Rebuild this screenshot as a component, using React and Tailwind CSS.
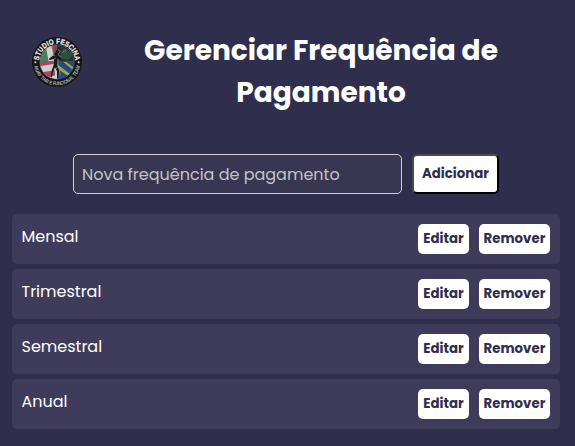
const frequencies = ['Mensal', 'Trimestral', 'Semestral', 'Anual'];

function Logo() {
  return (
    <svg viewBox="0 0 50 50" className="size-[52px] shrink-0" role="img" aria-label="Studio Fescina">
      <defs>
        <path id="top-arc" d="M7.6 25a17.4 17.4 0 0 1 34.8 0" />
        <path id="bottom-arc" d="M2.6 25a22.4 22.4 0 0 0 44.8 0" />
        <clipPath id="disc"><circle cx="25" cy="25" r="16.5" /></clipPath>
      </defs>
      <circle cx="25" cy="25" r="24.6" fill="#161619" stroke="#45434d" strokeWidth=".5" />
      <g clipPath="url(#disc)">
        <path d="M8 8h17v17H8z" fill="#8b918d" />
        <path d="M8 8h8l5 16H8z" fill="#4d7c65" />
        <path d="M14 8h5l4 17h-6z" fill="#d3d1cc" />
        <path d="M20 8h6v16h-3z" fill="#8a4247" />
        <path d="M25 8h17v17H25z" fill="#26362f" />
        <path d="M31 12l10 5-5 6-9-2z" fill="#304c3d" />
        <path d="M8 25h17v18H8z" fill="#cfccd6" />
        <path d="M8 24h14v3L8 29zM9 35l14-2v5l-12 3z" fill="#a5485a" />
        <path d="M25 24h17v18H25z" fill="#244a80" />
        <path d="M25 27l17 13v3L25 31zM34 25l8 6v3l-11-9z" fill="#a5a444" />
      </g>
      <circle cx="25" cy="25" r="16.5" fill="none" stroke="#77777c" strokeWidth=".4" />
      <path d="M25 13l3 2-1 3 3 3-2 2-3-1v5l2 6-1 8-1-1v-6l-2-4-2 5-1 5-1-1 1-6 2-6v-5l-4 1-1-1 5-4z" fill="#17191d" />
      <path d="M26 13l2 2-2 3 4 3m-6 0l-4 3m6-2v7l-3 4m4-3l1 8M19 18l4 1m7-3l4-3" fill="none" stroke="#aaa9a2" strokeWidth=".6" />
      <g fontFamily="'Liberation Sans', sans-serif" fontWeight="700">
        <text fontSize="7.2" fill="#f0efef" stroke="#f0efef" strokeWidth=".2">
          <textPath href="#top-arc" startOffset="1.5" textLength="51.5" lengthAdjust="spacingAndGlyphs">STUDIO FESCINA</textPath>
        </text>
        <text fontSize="5.2" fill="#b4b3b6">
          <textPath href="#bottom-arc" startOffset="4.5" textLength="61.5" lengthAdjust="spacingAndGlyphs">MUAY THAI E FUNCIONAL TEAM</textPath>
        </text>
      </g>
      <circle cx="4.2" cy="25.2" r="1" fill="#d9d8da" />
      <circle cx="45.8" cy="25.2" r="1" fill="#d9d8da" />
    </svg>
  );
}

function RowButton({ className, children }) {
  return (
    <button className={`h-[30px] rounded-[5px] bg-white text-[13.33px] font-bold leading-[30px] whitespace-nowrap text-[#302e4d] ${className}`}>
      {children}
    </button>
  );
}

export default function App() {
  return (
    <main className="h-screen overflow-hidden bg-[#302e4d] pl-3 pr-[15px] font-['Poppins','Inter',sans-serif] text-white">
      <header className="flex h-[154px] items-start pl-[19px] pt-[30px]">
        <div className="mt-[6px]"><Logo /></div>
        <h1 className="ml-[38px] flex w-[400px] flex-col items-center whitespace-nowrap text-[28px] font-bold leading-[42px]">
          <span>Gerenciar Frequência de</span>
          <span>Pagamento</span>
        </h1>
      </header>
      <form className="flex h-10 gap-[10px] pl-[61px]" onSubmit={(e) => e.preventDefault()}>
        <input
          placeholder="Nova frequência de pagamento"
          className="h-10 w-[329px] rounded-[5px] border border-[#d0cfd9] bg-[#383651] px-2 text-base text-white placeholder:text-[#c3c2c9]"
        />
        <button className="h-10 w-[87px] rounded-[5px] border-2 border-t-[#4b4b4b] border-l-[#4b4b4b] border-r-black border-b-black bg-white text-[13.33px] font-bold whitespace-nowrap text-[#302e4d]">
          Adicionar
        </button>
      </form>
      <ul className="mt-5 flex flex-col gap-[5px]">
        {frequencies.map((name) => (
          <li key={name} className="flex h-[50px] justify-between rounded-[5px] bg-[#3e3c5a] p-[10px]">
            <span className="-ml-[0.5px] text-base leading-[26px]">{name}</span>
            <div className="flex gap-[10px]">
              <RowButton className="w-[51px]">Editar</RowButton>
              <RowButton className="w-[71px]">Remover</RowButton>
            </div>
          </li>
        ))}
      </ul>
    </main>
  );
}
